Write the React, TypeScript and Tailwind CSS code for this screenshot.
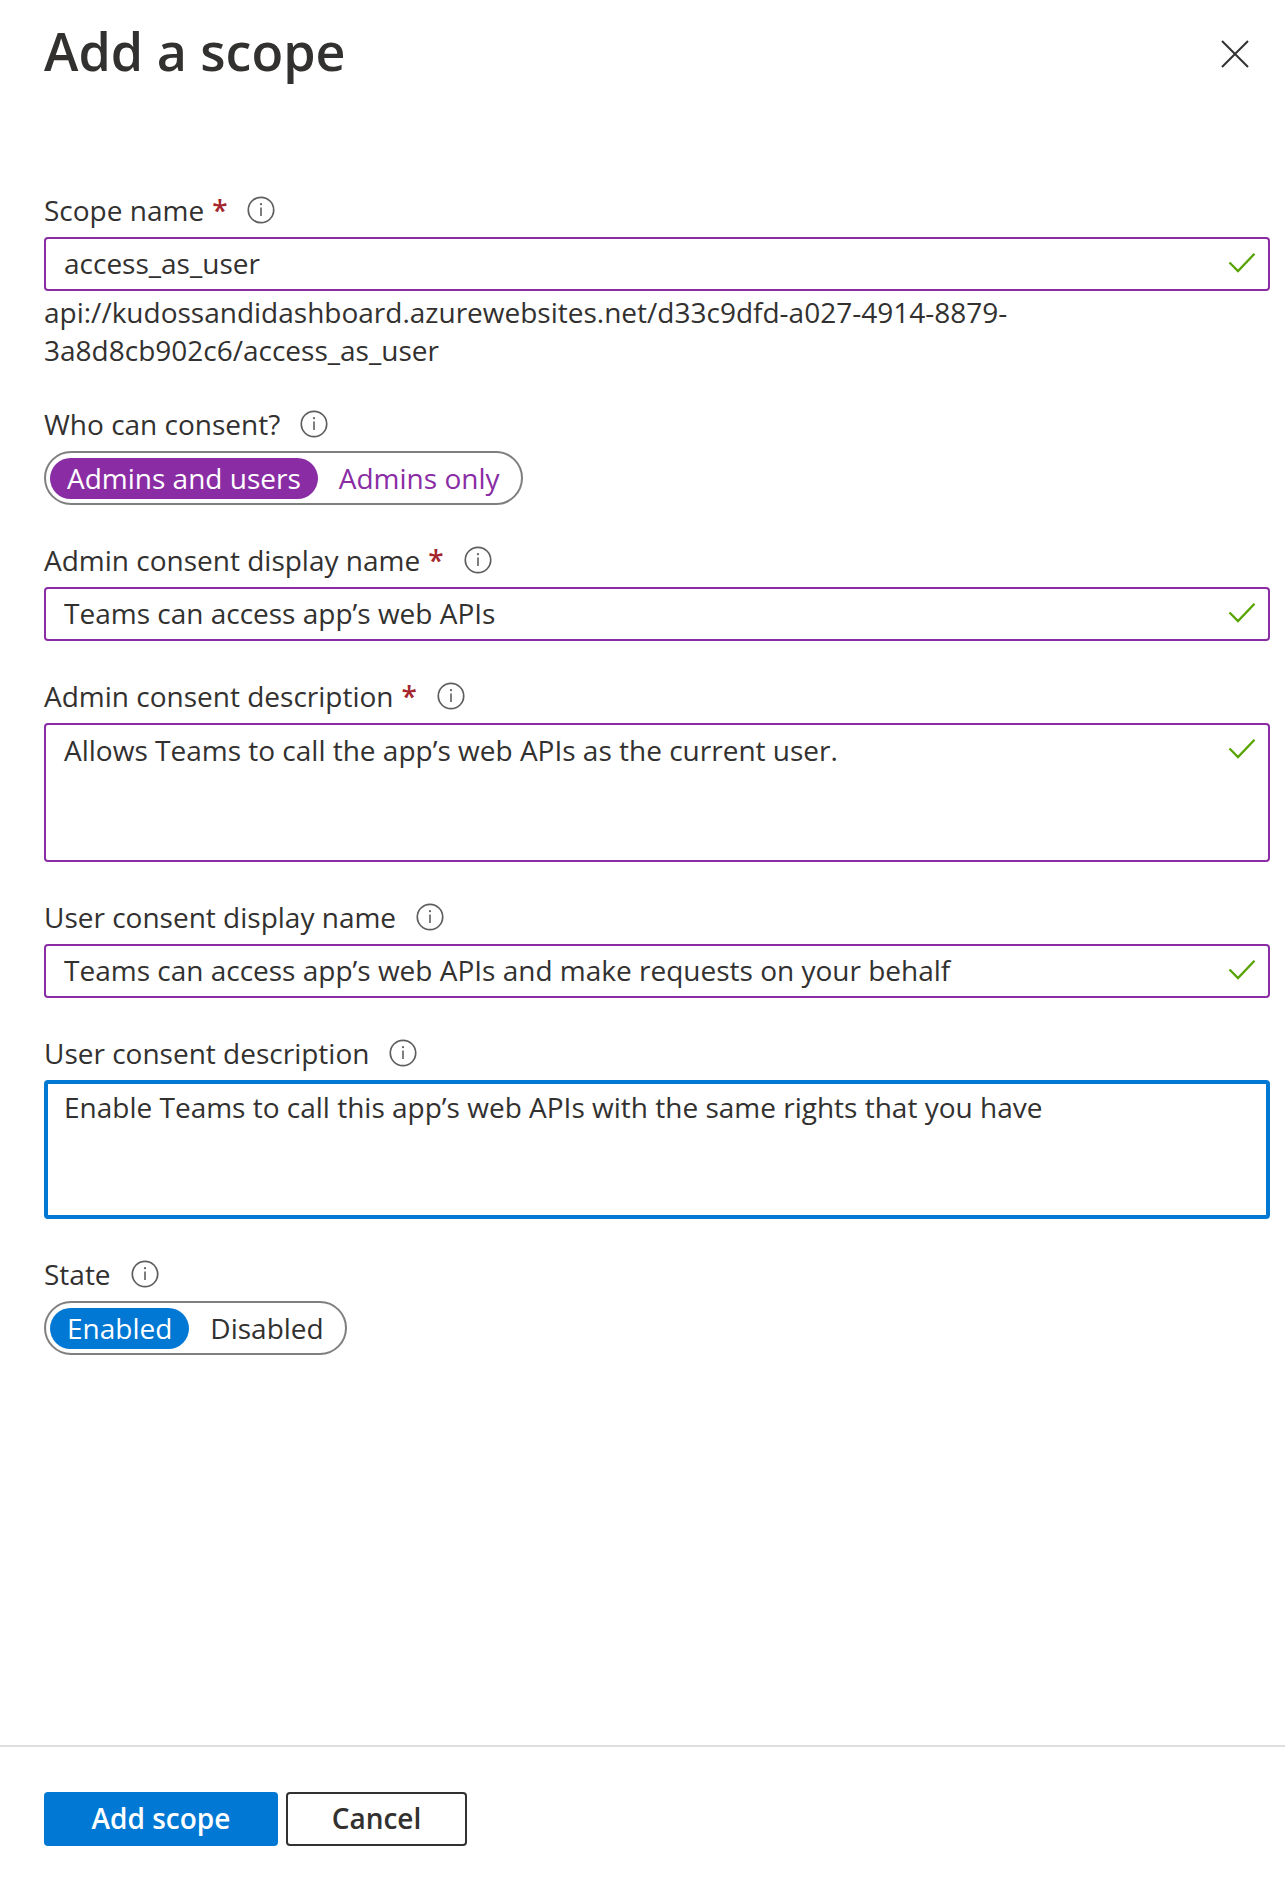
import { useState, type ReactNode } from "react";

function InfoIcon() {
  return (
    <svg viewBox="0 0 28 28" className="size-7" fill="none" aria-hidden="true">
      <circle cx="14" cy="14" r="12.7" stroke="#605e5c" strokeWidth="1.7" />
      <path d="M14 11.5V20" stroke="#605e5c" strokeWidth="1.6" />
      <circle cx="14" cy="8.2" r="1.1" fill="#605e5c" />
    </svg>
  );
}

function CheckIcon() {
  return (
    <svg
      viewBox="0 0 28 22"
      className="pointer-events-none absolute top-[15px] right-3.5 h-[22px] w-7"
      fill="none"
      aria-hidden="true"
    >
      <path d="M1.5 10.5L10 19L26.5 1.8" stroke="#57a300" strokeWidth="2.3" />
    </svg>
  );
}

function InfoButton({ about }: { about: string }) {
  return (
    <button type="button" aria-label={`More about ${about}`} className="flex">
      <InfoIcon />
    </button>
  );
}

type FieldProps = {
  label: string;
  id: string;
  required?: boolean;
  group?: boolean;
  children: ReactNode;
};

function Field({ label, id, required, group, children }: FieldProps) {
  return (
    <div className="flex flex-col gap-2">
      <div className="flex h-[38px] items-center gap-5">
        {group ? (
          <span id={id}>{label}</span>
        ) : (
          <label htmlFor={id}>
            {label}
            {required && <span className="ml-2 font-semibold text-[#a4262c]">*</span>}
          </label>
        )}
        <InfoButton about={label} />
      </div>
      {children}
    </div>
  );
}

function TextField({ id, value }: { id: string; value: string }) {
  return (
    <div className="relative flex">
      <input
        id={id}
        type="text"
        defaultValue={value}
        className="h-[54px] w-full rounded-sm border-2 border-[#8a2da5] bg-white pr-14 pb-0.5 pl-[18px] outline-none"
      />
      <CheckIcon />
    </div>
  );
}

function TextArea({ id, value, focused }: { id: string; value: string; focused?: boolean }) {
  return (
    <div className="relative flex">
      <textarea
        id={id}
        defaultValue={value}
        className={
          focused
            ? "h-[139px] w-full resize-none rounded-sm border-4 border-[#0078d4] bg-white px-4 py-1 outline-none"
            : "h-[139px] w-full resize-none rounded-sm border-2 border-[#8a2da5] bg-white py-1.5 pr-14 pl-[18px] outline-none"
        }
      />
      {!focused && <CheckIcon />}
    </div>
  );
}

type ToggleProps = { name: string; labelId: string; options: string[]; edited?: boolean };

function Toggle({ name, labelId, options, edited }: ToggleProps) {
  const [selected, setSelected] = useState(options[0]);
  const on = edited ? "bg-[#8a2da5] text-white" : "bg-[#0078d4] text-white";
  const off = edited ? "text-[#8a2da5]" : "text-[#323130]";
  return (
    <div
      role="radiogroup"
      aria-labelledby={labelId}
      className="flex h-[54px] items-center gap-1 self-start rounded-full border-2 border-[#7f7f7f] px-1"
    >
      {options.map((option) => (
        <label
          key={option}
          className={`relative flex h-[41px] cursor-pointer items-center rounded-full px-[17px] ${
            selected === option ? on : off
          }`}
        >
          <input
            type="radio"
            name={name}
            checked={selected === option}
            onChange={() => setSelected(option)}
            className="sr-only"
          />
          {option}
        </label>
      ))}
    </div>
  );
}

export default function App() {
  return (
    <form
      onSubmit={(event) => event.preventDefault()}
      className="flex min-h-screen flex-col bg-white font-['Open_Sans','Noto_Sans',sans-serif] text-[28px] leading-[38px] text-[#323130]"
    >
      <header className="flex items-center justify-between pt-[18px] pr-[35px] pl-11">
        <h1 className="pb-1.5 text-[52px] leading-[66px] font-semibold">Add a scope</h1>
        <button type="button" aria-label="Close" className="flex">
          <svg viewBox="0 0 30 30" className="size-[30px]" fill="none" aria-hidden="true">
            <path d="M2 2L28 28M28 2L2 28" stroke="#323130" strokeWidth="2" />
          </svg>
        </button>
      </header>

      <main className="flex grow flex-col gap-9 pt-[101px] pr-[15px] pb-9 pl-11">
        <div>
          <Field label="Scope name" id="scope-name" required>
            <TextField id="scope-name" value="access_as_user" />
          </Field>
          <p className="max-w-[1000px] pt-0.5">
            api://kudossandidashboard.azurewebsites.net/d33c9dfd-a027-4914-8879-3a8d8cb902c6/access_as_user
          </p>
        </div>
        <Field label="Who can consent?" id="who-can-consent" group>
          <Toggle
            name="consent"
            labelId="who-can-consent"
            options={["Admins and users", "Admins only"]}
            edited
          />
        </Field>
        <Field label="Admin consent display name" id="admin-name" required>
          <TextField id="admin-name" value="Teams can access app’s web APIs" />
        </Field>
        <Field label="Admin consent description" id="admin-description" required>
          <TextArea
            id="admin-description"
            value="Allows Teams to call the app’s web APIs as the current user."
          />
        </Field>
        <Field label="User consent display name" id="user-name">
          <TextField
            id="user-name"
            value="Teams can access app’s web APIs and make requests on your behalf"
          />
        </Field>
        <Field label="User consent description" id="user-description">
          <TextArea
            id="user-description"
            value="Enable Teams to call this app’s web APIs with the same rights that you have"
            focused
          />
        </Field>
        <Field label="State" id="state" group>
          <Toggle name="state" labelId="state" options={["Enabled", "Disabled"]} />
        </Field>
      </main>

      <footer className="flex gap-2 border-t-2 border-[#e1dfdd] pt-[45px] pb-[33px] pl-11 font-semibold">
        <button type="submit" className="h-[54px] w-[234px] rounded-sm bg-[#0078d4] pb-0.5 text-white">
          Add scope
        </button>
        <button
          type="button"
          className="h-[54px] w-[181px] rounded-sm border-2 border-[#323130] pb-0.5"
        >
          Cancel
        </button>
      </footer>
    </form>
  );
}
